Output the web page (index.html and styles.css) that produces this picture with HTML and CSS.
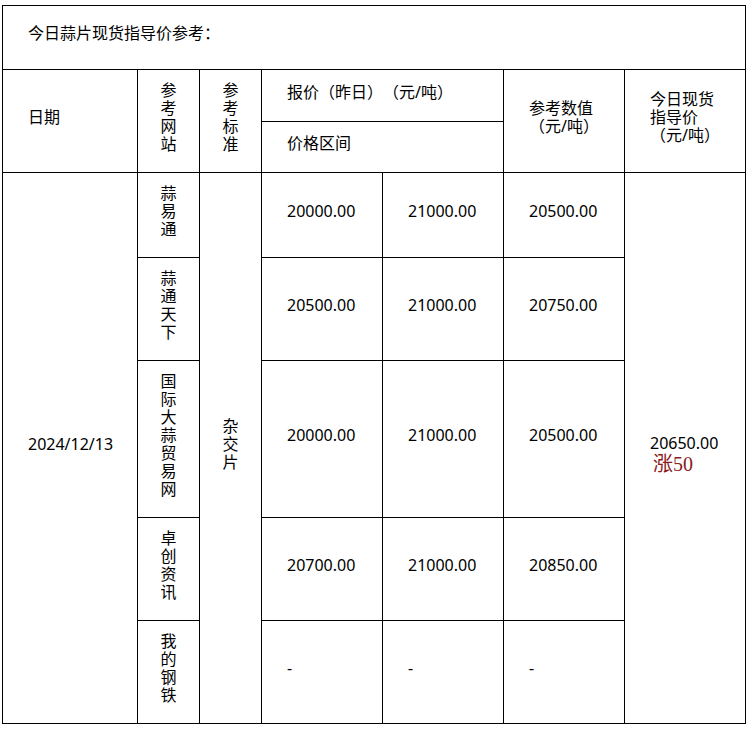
FILE: index.html
```html
<!DOCTYPE html>
<html lang="zh-CN">
<head>
<meta charset="utf-8">
<title>今日蒜片现货指导价参考</title>
<link rel="stylesheet" href="styles.css">
</head>
<body>
<table class="price-table">
  <colgroup>
    <col class="c-date">
    <col class="c-narrow">
    <col class="c-narrow">
    <col class="c-wide">
    <col class="c-wide">
    <col class="c-wide">
    <col class="c-wide">
  </colgroup>
  <tbody>
    <tr>
      <td class="title" colspan="7">今日蒜片现货指导价参考：</td>
    </tr>
    <tr>
      <td rowspan="2">日期</td>
      <td rowspan="2" class="center">参考网站</td>
      <td rowspan="2" class="center">参考标准</td>
      <td colspan="2" class="sub">报价（昨日）（元/吨）</td>
      <td rowspan="2">参考数值（元/吨）</td>
      <td rowspan="2">今日现货指导价（元/吨）</td>
    </tr>
    <tr>
      <td colspan="2" class="sub">价格区间</td>
    </tr>
    <tr>
      <td rowspan="5" class="date">2024/12/13</td>
      <td class="center">蒜易通</td>
      <td rowspan="5" class="center">杂交片</td>
      <td>20000.00</td>
      <td>21000.00</td>
      <td>20500.00</td>
      <td rowspan="5" class="today">20650.00<br><span class="rise">涨50</span></td>
    </tr>
    <tr>
      <td class="center">蒜通天下</td>
      <td>20500.00</td>
      <td>21000.00</td>
      <td>20750.00</td>
    </tr>
    <tr>
      <td class="center">国际大蒜贸易网</td>
      <td>20000.00</td>
      <td>21000.00</td>
      <td>20500.00</td>
    </tr>
    <tr>
      <td class="center">卓创资讯</td>
      <td>20700.00</td>
      <td>21000.00</td>
      <td>20850.00</td>
    </tr>
    <tr>
      <td class="center">我的钢铁</td>
      <td>-</td>
      <td>-</td>
      <td>-</td>
    </tr>
  </tbody>
</table>
</body>
</html>
```
FILE: styles.css
```css
html, body {
  margin: 0;
  padding: 0;
  background: #ffffff;
}

body {
  padding: 5px 2px;
  font-family: "Noto Sans", "Noto Sans CJK SC", sans-serif;
  font-size: 16px;
  line-height: 18px;
  color: #000000;
  text-spacing-trim: space-all;
}

.price-table {
  border-collapse: collapse;
  table-layout: fixed;
  width: 744px;
}

.c-date { width: 135px; }
.c-narrow { width: 62px; }
.c-wide { width: 121px; }

.price-table td {
  border: 1px solid #000000;
  padding: 11px 25px 19px;
  vertical-align: middle;
  text-align: left;
}

.price-table td.title {
  padding: 18px 25px 27px;
}

.price-table td.center {
  padding-left: 22px;
  padding-right: 22px;
  text-align: center;
  word-break: break-all;
}

.price-table td.date {
  white-space: nowrap;
}

.price-table td.sub {
  padding-top: 12px;
  padding-bottom: 19px;
}

.price-table td.today {
  padding-top: 33px;
}

.rise {
  display: inline-block;
  margin-left: 3px;
  font-family: "Liberation Serif", "Noto Sans CJK SC", serif;
  font-size: 20px;
  line-height: 24px;
  color: #8b1a1a;
}
```
